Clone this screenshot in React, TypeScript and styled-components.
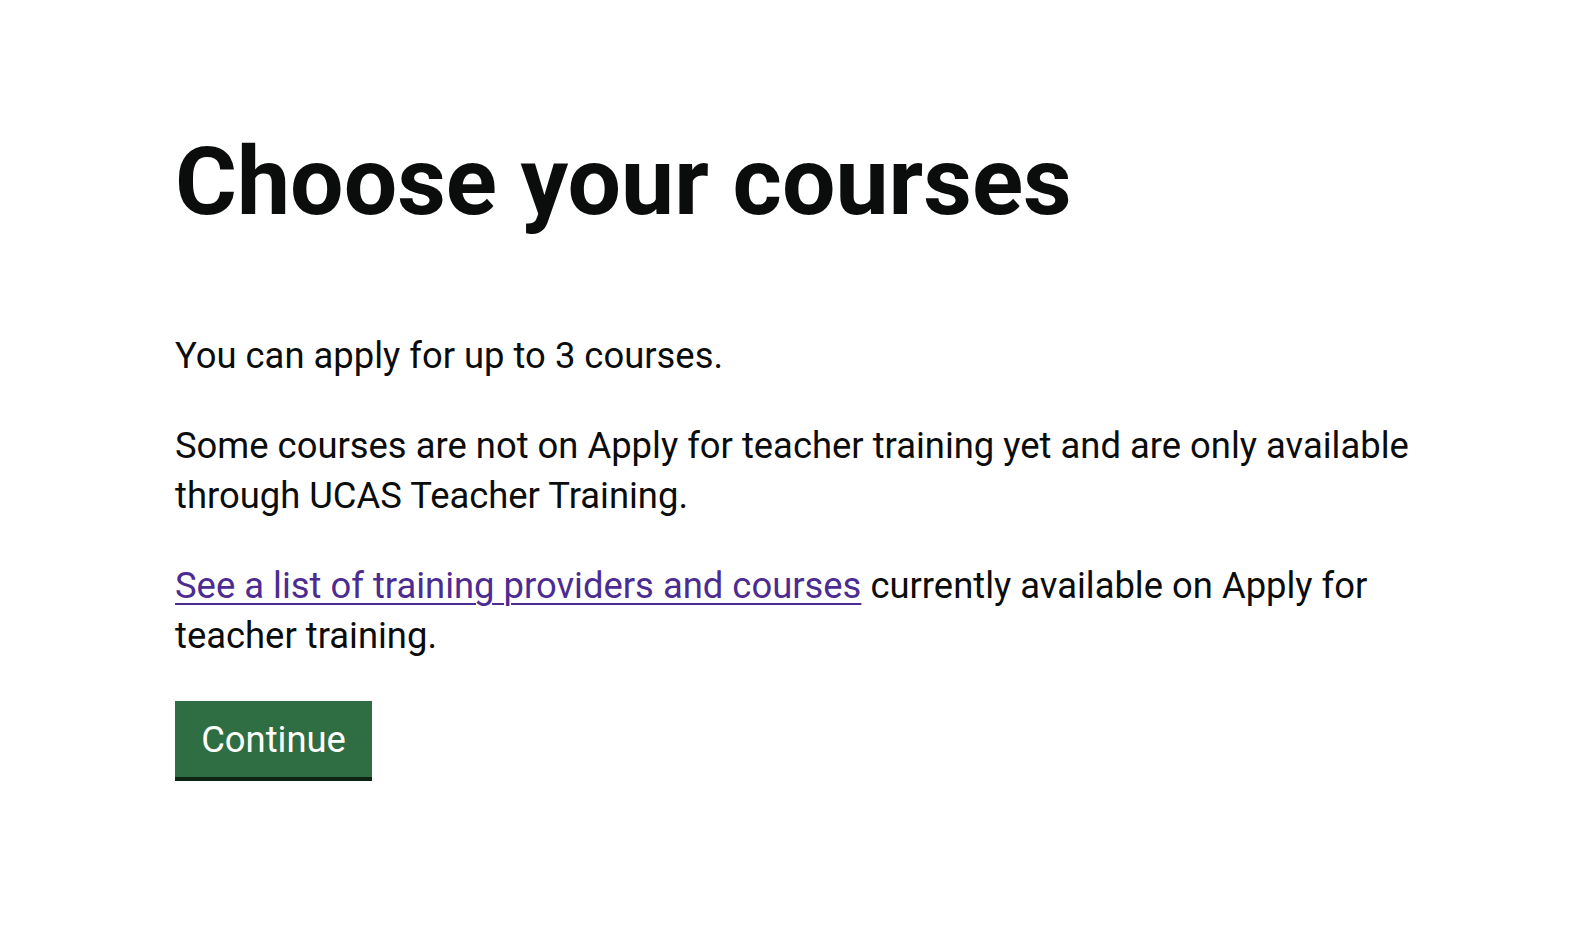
import React from "react";
import styled, { createGlobalStyle } from "styled-components";

const GlobalStyle = createGlobalStyle`
  html, body {
    margin: 0;
    padding: 0;
    background: #ffffff;
  }
  body {
    font-family: Roboto, "Liberation Sans", Arial, sans-serif;
    color: #0b0c0c;
    -webkit-font-smoothing: antialiased;
  }
`;

const Page = styled.main`
  display: flex;
  flex-direction: column;
  align-items: flex-start;
  padding: 132px 0 40px 175px;
  max-width: 1250px;
`;

const Heading = styled.h1`
  margin: 0 0 99px;
  font-family: Roboto, "Liberation Sans", Arial, sans-serif;
  font-weight: 700;
  font-size: 94.8px;
  line-height: 100px;
  letter-spacing: 0;
  color: #0b0c0c;
`;

const Body = styled.p`
  margin: 0 0 40px;
  font-size: 36.4px;
  line-height: 50px;
  font-weight: 400;
  color: #0b0c0c;
`;

const Link = styled.a`
  color: #4c2c92;
  text-decoration: underline;
  text-decoration-thickness: 2px;
  text-underline-offset: 5px;
`;

const Button = styled.button`
  display: inline-flex;
  align-items: center;
  justify-content: center;
  box-sizing: border-box;
  width: 197px;
  height: 80px;
  margin: 0;
  padding: 0 20px 0;
  border: none;
  border-bottom: 4px solid #0f2617;
  border-radius: 0;
  background: #2f6e42;
  color: #ffffff;
  font-family: Roboto, "Liberation Sans", Arial, sans-serif;
  font-size: 36.4px;
  line-height: 45px;
  font-weight: 400;
  cursor: pointer;
`;

export default function App() {
  return (
    <>
      <GlobalStyle />
      <Page>
        <Heading>Choose your courses</Heading>
        <Body>You can apply for up to 3 courses.</Body>
        <Body>
          Some courses are not on Apply for teacher training yet and are only available through UCAS
          Teacher Training.
        </Body>
        <Body>
          <Link href="#">See a list of training providers and courses</Link> currently available on
          Apply for teacher training.
        </Body>
        <Button type="button">Continue</Button>
      </Page>
    </>
  );
}
